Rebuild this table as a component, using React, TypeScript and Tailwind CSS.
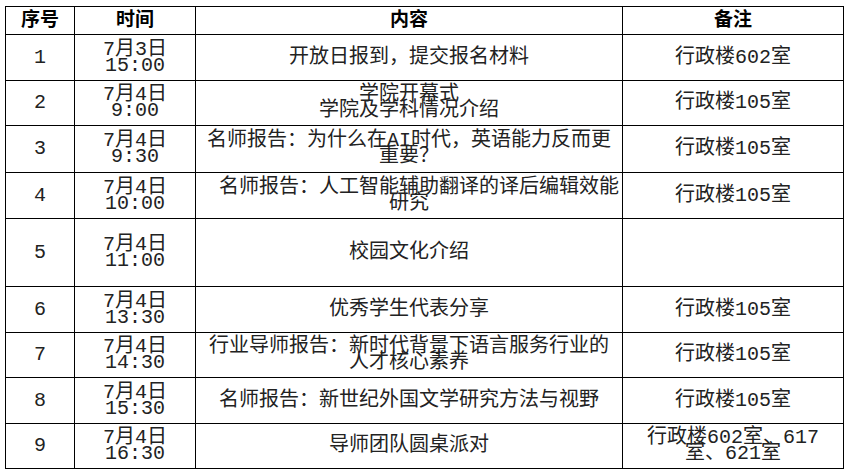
type Row = {
  no: string;
  date: string;
  time: string;
  content: string[];
  note: string[];
  height: string;
};

const rows: Row[] = [
  { no: "1", date: "7月3日", time: "15:00", content: ["开放日报到，提交报名材料"], note: ["行政楼602室"], height: "h-[46px]" },
  { no: "2", date: "7月4日", time: "9:00", content: ["学院开幕式", "学院及学科情况介绍"], note: ["行政楼105室"], height: "h-[45px]" },
  {
    no: "3",
    date: "7月4日",
    time: "9:30",
    content: ["名师报告：为什么在AI时代，英语能力反而更", "重要？"],
    note: ["行政楼105室"],
    height: "h-[47px]",
  },
  {
    no: "4",
    date: "7月4日",
    time: "10:00",
    content: ["\u3000名师报告：人工智能辅助翻译的译后编辑效能", "研究"],
    note: ["行政楼105室"],
    height: "h-[46px]",
  },
  { no: "5", date: "7月4日", time: "11:00", content: ["校园文化介绍"], note: [], height: "h-[68px]" },
  { no: "6", date: "7月4日", time: "13:30", content: ["优秀学生代表分享"], note: ["行政楼105室"], height: "h-[46px]" },
  {
    no: "7",
    date: "7月4日",
    time: "14:30",
    content: ["行业导师报告：新时代背景下语言服务行业的", "人才核心素养"],
    note: ["行政楼105室"],
    height: "h-[45px]",
  },
  {
    no: "8",
    date: "7月4日",
    time: "15:30",
    content: ["名师报告：新世纪外国文学研究方法与视野"],
    note: ["行政楼105室"],
    height: "h-[46px]",
  },
  {
    no: "9",
    date: "7月4日",
    time: "16:30",
    content: ["导师团队圆桌派对"],
    note: ["行政楼602室、617", "室、621室"],
    height: "h-[45px]",
  },
];

const cell = "border border-black p-0 text-center align-middle";

function Lines({ lines }: { lines: string[] }) {
  return (
    <>
      {lines.map((line) => (
        <div key={line} className="whitespace-pre">
          {line}
        </div>
      ))}
    </>
  );
}

export default function App() {
  return (
    <div className="min-h-screen bg-white pl-[5px] pt-[6px]">
      <table className="w-[839px] table-fixed border-collapse font-['Liberation_Mono','Noto_Sans_CJK_SC',monospace] text-[20px] leading-[16px] text-[#222]">
        <colgroup>
          <col className="w-[69px]" />
          <col className="w-[121px]" />
          <col className="w-[427px]" />
          <col className="w-[221px]" />
        </colgroup>
        <thead>
          <tr className="h-[28px] text-[19px] font-bold text-black">
            <th className={cell}>序号</th>
            <th className={cell}>时间</th>
            <th className={cell}>内容</th>
            <th className={cell}>备注</th>
          </tr>
        </thead>
        <tbody>
          {rows.map((row) => (
            <tr key={row.no} className={row.height}>
              <td className={cell}>{row.no}</td>
              <td className={cell}>
                <Lines lines={[row.date, row.time]} />
              </td>
              <td className={cell}>
                <Lines lines={row.content} />
              </td>
              <td className={cell}>
                <Lines lines={row.note} />
              </td>
            </tr>
          ))}
        </tbody>
      </table>
    </div>
  );
}
